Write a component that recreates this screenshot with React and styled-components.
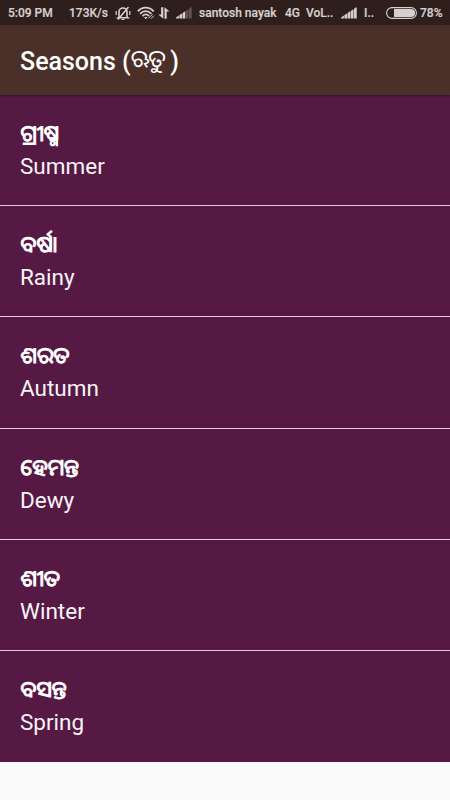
import React from "react";
import styled, { createGlobalStyle } from "styled-components";

const GlobalStyle = createGlobalStyle`
  body {
    background-color: #fafafa;
    font-family: Roboto, "Noto Sans Oriya", "Noto Sans", sans-serif;
    margin: 0;
  }
`;

const StatusBar = styled.div`
  align-items: center;
  background-color: #2f1f1c;
  box-sizing: border-box;
  color: #d6d1d0;
  display: flex;
  font-size: 12px;
  font-weight: 500;
  height: 25px;
  overflow: hidden;
  padding-left: 8px;
  -webkit-text-stroke: 0.2px #d6d1d0;
  svg {
    display: block;
    flex: none;
  }
`;

const StatusItem = styled.div`
  flex: none;
  line-height: 16px;
  padding-top: 1px;
  white-space: pre;
  width: ${(props) => props.$width}px;
`;

const AppBar = styled.header`
  align-items: center;
  background-color: #4b3029;
  box-shadow: 0 1px 2px rgba(0, 0, 0, 0.4);
  box-sizing: border-box;
  display: flex;
  height: 70px;
  padding: 4px 20px 0;
  position: relative;
`;

const Title = styled.h1`
  color: #ffffff;
  font-size: 25px;
  font-weight: 500;
  line-height: 32px;
  margin: 0;
  white-space: pre;
`;

const OriyaTitle = styled.span`
  font-size: 24px;
  font-weight: 400;
  letter-spacing: -1.8px;
  line-height: 1;
  vertical-align: 3px;
`;

const List = styled.ul`
  background-color: #551943;
  list-style: none;
  margin: 0;
  padding: 0;
`;

const Row = styled.li`
  border-bottom: 1px solid #dcd2d4;
  box-sizing: border-box;
  color: #ffffff;
  height: 111.2px;
  padding: 22px 20px 0;
  &:last-child {
    border-bottom-color: #551943;
  }
`;

/* The regular weight is thickened by a stroke, the bold cut is too wide */
const OriyaName = styled.div`
  font-size: 22px;
  font-weight: 400;
  height: 33px;
  line-height: 33px;
  padding-left: 0.6px;
  -webkit-text-stroke: 1px #ffffff;
`;

const EnglishName = styled.div`
  color: #f8f4f7;
  font-size: 22.5px;
  height: 33px;
  line-height: 33px;
`;

const seasons = [
  { oriya: "ଗ୍ରୀଷ୍ମ", english: "Summer" },
  { oriya: "ବର୍ଷା", english: "Rainy" },
  { oriya: "ଶରତ", english: "Autumn" },
  { oriya: "ହେମନ୍ତ", english: "Dewy" },
  { oriya: "ଶୀତ", english: "Winter" },
  { oriya: "ବସନ୍ତ", english: "Spring" },
];

function MutedBell() {
  return (
    <svg width="16" height="15" viewBox="0 0 16 15" fill="none" stroke="#d6d1d0">
      <path d="M4 11V6a4 4 0 0 1 8 0v5l1 .8H3z" strokeWidth="1.6" />
      <path d="M13.5 1 3 13.5" strokeWidth="1.5" />
      <path d="M1.2 5v4M14.8 5v4M6.5 13.5h3" strokeWidth="1.2" />
    </svg>
  );
}

function Wifi() {
  return (
    <svg width="18" height="14" viewBox="0 0 18 14" fill="none" stroke="#d6d1d0">
      <path d="M.8 5.3c4.5-5 11.4-5 15.9 0M3.1 7.8c3.3-3.6 8-3.6 11.3 0M5.6 10.1c2-2.2 4.5-2.2 6.5 0" strokeWidth="1.8" />
      <path d="m7 11 1.8 2.3L10.6 11z" fill="#d6d1d0" stroke="none" />
      <path d="m11.5 12.3 4-4M14 12.7l3-3" />
    </svg>
  );
}

function DataArrows() {
  return (
    <svg width="12" height="12" viewBox="0 0 12 12" fill="#d6d1d0">
      <path d="M5.3.3v11.4L.3 7.6h2.8V.3zM6.5 11.7V.3l5 4.1H8.7v7.3z" />
    </svg>
  );
}

function Signal({ level }) {
  return (
    <svg width="17" height="12" viewBox="0 0 17 12">
      {[0, 1, 2, 3, 4].map((bar) => (
        <path
          key={bar}
          d={`M${bar * 3.2 + 0.2} ${10.2 - bar * 2.1}l2.7-1.7V11.5h-2.7z`}
          fill={bar < level ? "#d6d1d0" : "#65524e"}
        />
      ))}
    </svg>
  );
}

function Battery() {
  return (
    <svg width="31" height="12" viewBox="0 0 31 12">
      <rect x=".6" y=".6" width="29.8" height="10.8" rx="5.4" fill="none" stroke="#d6d1d0" strokeWidth="1.1" />
      <path d="M8 2h17a4 4 0 0 1 0 8H8z" fill="#d6d1d0" />
    </svg>
  );
}

function App() {
  return (
    <>
      <GlobalStyle />
      <StatusBar>
        <StatusItem $width={61}>5:09 PM</StatusItem>
        <StatusItem $width={46}>173K/s</StatusItem>
        <StatusItem $width={22}>
          <MutedBell />
        </StatusItem>
        <StatusItem $width={21}>
          <Wifi />
        </StatusItem>
        <StatusItem $width={18}>
          <DataArrows />
        </StatusItem>
        <StatusItem $width={23}>
          <Signal level={3} />
        </StatusItem>
        <StatusItem $width={86}>santosh nayak</StatusItem>
        <StatusItem $width={21}>4G</StatusItem>
        <StatusItem $width={35}>VoL..</StatusItem>
        <StatusItem $width={23}>
          <Signal level={5} />
        </StatusItem>
        <StatusItem $width={22}>I..</StatusItem>
        <StatusItem $width={34}>
          <Battery />
        </StatusItem>
        <StatusItem $width={26}>78%</StatusItem>
      </StatusBar>
      <AppBar>
        <Title>
          Seasons (<OriyaTitle lang="or">ଋତୁ</OriyaTitle> )
        </Title>
      </AppBar>
      <List>
        {seasons.map((season) => (
          <Row key={season.english}>
            <OriyaName lang="or">{season.oriya}</OriyaName>
            <EnglishName>{season.english}</EnglishName>
          </Row>
        ))}
      </List>
    </>
  );
}

export default App;
